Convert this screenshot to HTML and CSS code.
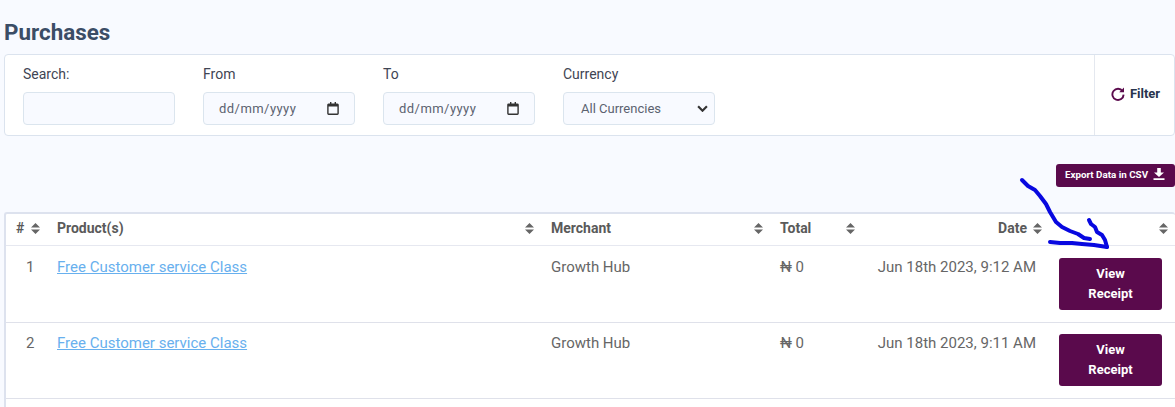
FILE: index.html
```html
<!DOCTYPE html>
<html lang="en">
<head>
<meta charset="utf-8">
<title>Purchases</title>
<link rel="stylesheet" href="styles.css">
</head>
<body>
<main class="page">
  <h1 class="title">Purchases</h1>
  <section class="filters">
    <div class="fields">
      <div class="field">
        <label class="label">Search:</label>
        <input class="control" type="text">
      </div>
      <div class="field">
        <label class="label">From</label>
        <div class="control date"><span>dd/mm/yyyy</span>
          <svg class="cal" viewBox="0 0 12 13" width="12" height="13"><path d="M3 0h1.4v1.5h3.2V0H9v1.5h1.4A1.4 1.4 0 0 1 11.8 3v8.6a1.4 1.4 0 0 1-1.4 1.4H1.6A1.4 1.4 0 0 1 .2 11.6V3a1.4 1.4 0 0 1 1.4-1.5H3zM1.6 4.6v7h8.8v-7z"/></svg>
        </div>
      </div>
      <div class="field">
        <label class="label">To</label>
        <div class="control date"><span>dd/mm/yyyy</span>
          <svg class="cal" viewBox="0 0 12 13" width="12" height="13"><path d="M3 0h1.4v1.5h3.2V0H9v1.5h1.4A1.4 1.4 0 0 1 11.8 3v8.6a1.4 1.4 0 0 1-1.4 1.4H1.6A1.4 1.4 0 0 1 .2 11.6V3a1.4 1.4 0 0 1 1.4-1.5H3zM1.6 4.6v7h8.8v-7z"/></svg>
        </div>
      </div>
      <div class="field">
        <label class="label">Currency</label>
        <div class="control select"><span>All Currencies</span>
          <svg class="chev" viewBox="0 0 10 6" width="11" height="7"><path d="M1 1l4 4 4-4" fill="none" stroke="#333" stroke-width="2"/></svg>
        </div>
      </div>
    </div>
    <button class="filter-btn">
      <svg viewBox="0 0 14 14" width="14" height="14"><path d="M11.6 4.2A5.6 5.6 0 1 0 12.6 7.6" fill="none" stroke="#5a0a4c" stroke-width="1.9"/><path d="M8.2 5.2h4.8V.6z" fill="#5a0a4c"/></svg>
      <span>Filter</span>
    </button>
  </section>

  <div class="export-row">
    <button class="export"><span>Export Data in CSV</span>
      <svg viewBox="0 0 12 12" width="12" height="12"><path d="M4.2 0h3.6v4.5H11L6 9 1 4.5h3.2z M.5 10.3h11V12H.5z" fill="#fff"/></svg>
    </button>
  </div>

  <div class="table-wrap">
    <table class="table">
      <colgroup>
        <col class="c-num"><col class="c-prod"><col class="c-merch"><col class="c-total"><col class="c-date"><col class="c-act">
      </colgroup>
      <thead>
        <tr>
          <th><div class="th">#<svg class="sort" viewBox="0 0 9 11"><path d="M4.5 0L9 4.5H0zM4.5 11L0 6.5h9z"/></svg></div></th>
          <th><div class="th">Product(s)<svg class="sort" viewBox="0 0 9 11"><path d="M4.5 0L9 4.5H0zM4.5 11L0 6.5h9z"/></svg></div></th>
          <th><div class="th">Merchant<svg class="sort" viewBox="0 0 9 11"><path d="M4.5 0L9 4.5H0zM4.5 11L0 6.5h9z"/></svg></div></th>
          <th><div class="th">Total<svg class="sort" viewBox="0 0 9 11"><path d="M4.5 0L9 4.5H0zM4.5 11L0 6.5h9z"/></svg></div></th>
          <th><div class="th th-date">Date<svg class="sort" viewBox="0 0 9 11"><path d="M4.5 0L9 4.5H0zM4.5 11L0 6.5h9z"/></svg></div></th>
          <th><div class="th th-act"><svg class="sort" viewBox="0 0 9 11"><path d="M4.5 0L9 4.5H0zM4.5 11L0 6.5h9z"/></svg></div></th>
        </tr>
      </thead>
      <tbody>
        <tr>
          <td class="num">1</td>
          <td><a class="link" href="#">Free Customer service Class</a></td>
          <td>Growth Hub</td>
          <td>₦ 0</td>
          <td class="date-cell">Jun 18th 2023, 9:12 AM</td>
          <td class="act"><button class="receipt">View Receipt</button></td>
        </tr>
        <tr>
          <td class="num">2</td>
          <td><a class="link" href="#">Free Customer service Class</a></td>
          <td>Growth Hub</td>
          <td>₦ 0</td>
          <td class="date-cell">Jun 18th 2023, 9:11 AM</td>
          <td class="act"><button class="receipt">View Receipt</button></td>
        </tr>
        <tr>
          <td class="num">&nbsp;</td><td></td><td></td><td></td><td></td><td class="act"></td>
        </tr>
      </tbody>
    </table>
  </div>

  <svg class="scribble" viewBox="0 0 1175 407" width="1175" height="407" fill="none" stroke="#0808e0" stroke-width="4" stroke-linecap="round" stroke-linejoin="round">
    <path d="M1022 180L1028 186L1035 190L1040 196L1046 204L1050 212L1056 222L1062 227L1070 231L1078 234L1084 238L1090 239"/>
    <path d="M1050 242L1060 243L1072 243L1082 244L1094 245L1107 247"/>
    <path d="M1089 220L1091 224L1095 227L1097 232L1102 235L1105 240L1107 247"/>
  </svg>
</main>
</body>
</html>
```
FILE: styles.css
```css
* { box-sizing: border-box; }
html, body { margin: 0; padding: 0; height: 407px; overflow: hidden; }
body { background: #f8faff; font-family: Roboto, "Liberation Sans", sans-serif; color: #555; }
.page { position: relative; padding-left: 4px; height: 407px; overflow: hidden; }
.title { margin: 0; padding-top: 19px; height: 54px; font-size: 22.4px; line-height: 26px; font-weight: 700; color: #3b4d66; }

.filters { display: flex; height: 82px; background: #fff; border: 1px solid #dbe3ee; border-radius: 4px; }
.fields { flex: 1; display: flex; padding-left: 18px; padding-top: 11px; }
.field { width: 180px; display: flex; flex-direction: column; }
.label { font-size: 14px; line-height: 17px; color: #3f4554; height: 26px; }
.control { width: 152px; height: 33px; background: #f8faff; border: 1px solid #dbe5ee; border-radius: 4px; display: flex; align-items: center; font-size: 13px; color: #5b6270; }
.control.date { padding: 0 15px; justify-content: space-between; letter-spacing: .45px; }
.control.select { padding: 0 6px 0 17px; justify-content: space-between; }
.cal { fill: #333; display: block; }
.filter-btn { width: 80px; border: 0; border-left: 1px solid #e4e8ef; background: transparent; display: flex; align-items: center; justify-content: center; gap: 5px; font: 700 13px Roboto, sans-serif; color: #28344e; padding: 0 0 3px 2px; }

.export-row { display: flex; justify-content: flex-end; padding-top: 28px; height: 76px; }
.export { width: 119px; height: 23px; background: #5a0a4c; color: #fff; border: 0; border-radius: 3px; font: 700 9.8px Roboto, sans-serif; display: flex; align-items: center; justify-content: center; gap: 5px; padding: 0 1px 3px 0; }

.table-wrap { background: #fff; border: 2px solid #dde2ee; border-bottom: 0; border-right: 0; border-radius: 3px 3px 0 0; height: 195px; overflow: hidden; }
.table { width: 1169px; table-layout: fixed; border-collapse: separate; border-spacing: 0; font-size: 15px; color: #666; }
.c-num { width: 39px; } .c-prod { width: 494px; } .c-merch { width: 229px; } .c-total { width: 92px; } .c-date { width: 187px; } .c-act { width: 128px; }
th { height: 32px; padding: 0 5px 3px 12px; font-weight: 700; color: #5a5a5a; text-align: left; border-bottom: 1px solid #e6e8f0; }
th:first-child { padding-left: 10px; }
.th { display: flex; justify-content: space-between; align-items: center; font-size: 14px; }
.th-date { justify-content: flex-end; gap: 6px; }
.th-act { justify-content: flex-end; margin-right: 2px; }
.sort { width: 9px; height: 11px; fill: #666; display: block; }
td { height: 77px; padding: 12px 12px 0; vertical-align: top; border-bottom: 1px solid #dfe1ea; line-height: 18px; }
tbody tr:nth-child(2) td { height: 76px; padding-top: 11px; }
.num { padding-left: 20px; }
.link { color: #68b0ee; }
.date-cell { text-align: right; padding-right: 11px; white-space: nowrap; }
td.act { padding-right: 0; padding-left: 12px; }
.receipt { width: 103px; height: 52px; background: #5a0a4c; color: #fff; border: 0; border-radius: 3px; font: 700 13px/20px Roboto, sans-serif; padding: 0 20px; display: block; }
.scribble { position: absolute; left: 0; top: 0; pointer-events: none; }
```
